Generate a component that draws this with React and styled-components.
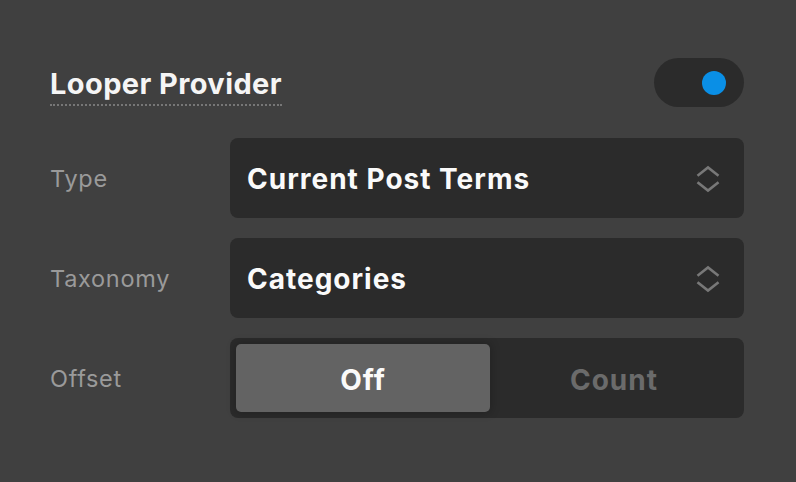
import React, {useState} from 'react';
import styled, {createGlobalStyle} from "styled-components";

const GlobalStyle = createGlobalStyle`
  html, body {
    margin: 0;
    padding: 0;
    background: #404040;
  }

  body {
    font-family: 'Inter', 'Liberation Sans', sans-serif;
    -webkit-font-smoothing: antialiased;
  }
`;

const Panel = styled.div`
  width: 796px;
  height: 482px;
  box-sizing: border-box;
  padding: 58px 52px 0 50px;
  background: #404040;
  display: flex;
  flex-direction: column;
`;

const Header = styled.div`
  display: flex;
  align-items: center;
  justify-content: space-between;
  height: 49px;
  margin-bottom: 31px;
`;

const Title = styled.span`
  color: #f5f5f5;
  font-size: 29px;
  font-weight: 650;
  letter-spacing: 0.4px;
  padding-bottom: 3px;
  margin-top: 6px;
  border-bottom: 2px dotted #777;
`;

const Toggle = styled.button`
  width: 90px;
  height: 49px;
  border: none;
  border-radius: 25px;
  background: #2b2b2b;
  padding: 0 18px;
  display: flex;
  align-items: center;
  justify-content: ${({on}) => on ? 'flex-end' : 'flex-start'};
  cursor: pointer;
`;

const Knob = styled.span`
  width: 24px;
  height: 24px;
  border-radius: 50%;
  background: ${({on}) => on ? '#0a8fe6' : '#777'};
`;

const Rows = styled.div`
  display: flex;
  flex-direction: column;
  gap: 20px;
`;

const Row = styled.div`
  display: grid;
  grid-template-columns: 180px 1fr;
  align-items: center;
`;

const Label = styled.span`
  color: #9a9a9a;
  font-size: 23.5px;
  font-weight: 400;
  letter-spacing: 0.7px;
`;

const Select = styled.div`
  height: 80px;
  border-radius: 8px;
  background: #2b2b2b;
  display: flex;
  align-items: center;
  justify-content: space-between;
  padding: 2px 24px 0 17px;
  color: #fafafa;
  font-size: 28px;
  font-weight: 700;
  letter-spacing: 1px;
  box-sizing: border-box;
`;

const Segmented = styled.div`
  height: 80px;
  border-radius: 8px;
  background: #2b2b2b;
  padding: 6px;
  box-sizing: border-box;
  display: grid;
  grid-template-columns: 254px 1fr;
`;

const Segment = styled.button`
  border: none;
  border-radius: 5px;
  padding: 3px 0 0;
  font-family: inherit;
  font-size: 28px;
  font-weight: 700;
  letter-spacing: 1px;
  cursor: pointer;
  background: ${({active}) => active ? '#636363' : 'transparent'};
  color: ${({active}) => active ? '#fafafa' : '#6b6b6b'};
  box-shadow: ${({active}) => active ? '0 0 8px 2px rgba(0,0,0,0.18)' : 'none'};
`;

const Chevrons = () => (
    <svg width="24" height="28" viewBox="0 0 24 28" fill="none" stroke="#787878" strokeWidth="2.6"
         strokeLinecap="square" strokeLinejoin="miter">
        <polyline points="2.5,10 12,2.5 21.5,10"/>
        <polyline points="2.5,18 12,25.5 21.5,18"/>
    </svg>
);

const App = () => {
    const [enabled, setEnabled] = useState(true);
    const [offset, setOffset] = useState('off');

    return (
        <>
            <GlobalStyle/>
            <Panel>
                <Header>
                    <Title>Looper Provider</Title>
                    <Toggle on={enabled ? 1 : 0} onClick={() => setEnabled(!enabled)}>
                        <Knob on={enabled ? 1 : 0}/>
                    </Toggle>
                </Header>
                <Rows>
                    <Row>
                        <Label>Type</Label>
                        <Select>
                            Current Post Terms
                            <Chevrons/>
                        </Select>
                    </Row>
                    <Row>
                        <Label>Taxonomy</Label>
                        <Select>
                            Categories
                            <Chevrons/>
                        </Select>
                    </Row>
                    <Row>
                        <Label>Offset</Label>
                        <Segmented>
                            <Segment active={offset === 'off' ? 1 : 0} onClick={() => setOffset('off')}>Off</Segment>
                            <Segment active={offset === 'count' ? 1 : 0} onClick={() => setOffset('count')}>Count</Segment>
                        </Segmented>
                    </Row>
                </Rows>
            </Panel>
        </>
    );
};

export default App;
